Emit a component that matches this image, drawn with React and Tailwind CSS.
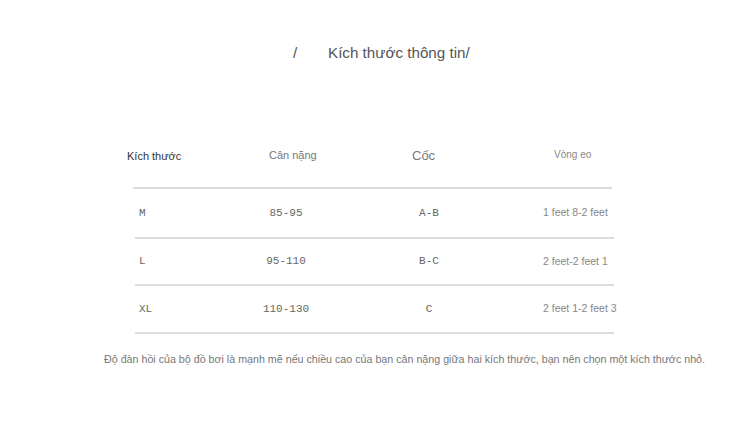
export default function App() {
  const rows = [
    { s: "M", w: "85-95", c: "A-B", e: "1 feet 8-2 feet", h: "h-[48px]" },
    { s: "L", w: "95-110", c: "B-C", e: "2 feet-2 feet 1", h: "h-[45px]" },
    { s: "XL", w: "110-130", c: "C", e: "2 feet 1-2 feet 3", h: "h-[46px]" },
  ];
  const mono = { fontFamily: '"Liberation Mono", "Courier New", monospace' };
  return (
    <div className="w-[750px] h-[427px] bg-white overflow-hidden pt-[43px]" style={{ fontFamily: '"Liberation Sans", Arial, sans-serif' }}>
      <div className="flex h-[20px] items-center ml-[293px] text-[15.2px] text-[#555] leading-[20px]">
        <span className="w-[35px]">/</span>
        <span>Kích thước thông tin/</span>
      </div>
      <div className="flex mt-[83px] h-[20px] items-center ml-[127px] leading-[20px]">
        <div className="w-[142px] text-[11px] text-[#333]">Kích thước</div>
        <div className="w-[143px] text-[11px] text-[#777] -mt-[3px]">Cân nặng</div>
        <div className="w-[142px] text-[13px] text-[#777]">Cốc</div>
        <div className="text-[10px] text-[#888] -mt-[2px]">Vòng eo</div>
      </div>
      <div className="ml-[133px] mt-[21px] w-[479px] h-[2px] bg-[#dcdcdc]" />
      {rows.map((r) => (
        <div key={r.s}>
          <div className={`flex items-center ml-[135px] ${r.h}`}>
            <div className="w-[91px] pl-[4px] text-[11px] text-[#666]" style={mono}>{r.s}</div>
            <div className="w-[120px] text-center text-[11px] text-[#666]" style={mono}>{r.w}</div>
            <div className="w-[166px] text-center text-[11px] text-[#666]" style={mono}>{r.c}</div>
            <div className="pl-[31px] text-[10.5px] text-[#888] whitespace-nowrap">{r.e}</div>
          </div>
          <div className="ml-[135px] w-[479px] h-[2px] bg-[#dcdcdc]" />
        </div>
      ))}
      <div className="mt-[17px] ml-[104px] whitespace-nowrap text-[10.7px] text-[#777] leading-[16px]">
        Độ đàn hồi của bộ đồ bơi là mạnh mẽ nếu chiều cao của bạn cân nặng giữa hai kích thước, bạn nên chọn một kích thước nhỏ.
      </div>
    </div>
  );
}
